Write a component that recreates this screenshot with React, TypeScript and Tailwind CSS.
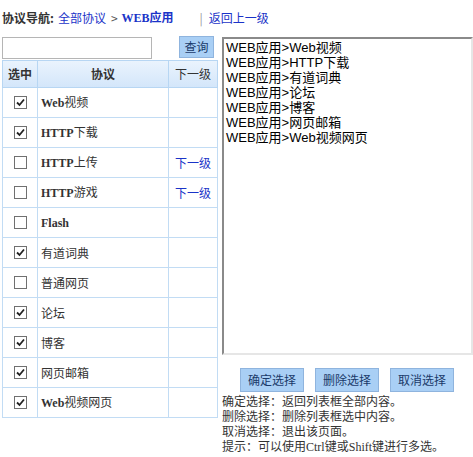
import React from "react";

const rows: { name: string; checked: boolean; next?: boolean }[] = [
  { name: "Web视频", checked: true },
  { name: "HTTP下载", checked: true },
  { name: "HTTP上传", checked: false, next: true },
  { name: "HTTP游戏", checked: false, next: true },
  { name: "Flash", checked: false },
  { name: "有道词典", checked: true },
  { name: "普通网页", checked: false },
  { name: "论坛", checked: true },
  { name: "博客", checked: true },
  { name: "网页邮箱", checked: true },
  { name: "Web视频网页", checked: true },
];

const selected = [
  "WEB应用>Web视频",
  "WEB应用>HTTP下载",
  "WEB应用>有道词典",
  "WEB应用>论坛",
  "WEB应用>博客",
  "WEB应用>网页邮箱",
  "WEB应用>Web视频网页",
];

const serif = "font-['Liberation_Serif','Noto_Sans_CJK_SC',serif]";
const cjk = "font-['Noto_Sans_CJK_SC',sans-serif]";

// latin runs in bold serif, the rest plain
const Name = ({ text }: { text: string }) => {
  const parts = text.match(/[A-Za-z]+|[^A-Za-z]+/g) || [];
  return (
    <>
      {parts.map((p, i) =>
        /[A-Za-z]/.test(p) ? (
          <span key={i} className={`font-bold ${serif}`}>
            {p}
          </span>
        ) : (
          <span key={i}>{p}</span>
        )
      )}
    </>
  );
};

const Box = ({ checked }: { checked: boolean }) => (
  <span className="inline-flex h-[13px] w-[13px] items-center justify-center border border-[#707070] bg-white">
    {checked && (
      <svg width="9" height="9" viewBox="0 0 9 9">
        <path d="M1 4.5 L3.5 7 L8 1.5" stroke="#222" strokeWidth="1.8" fill="none" />
      </svg>
    )}
  </span>
);

const ActionButton = ({ label }: { label: string }) => (
  <button className={`h-[24px] w-[64px] border border-[#8fb4de] bg-[#a9cff5] text-[12px] text-[#1a3a6a] ${cjk}`}>
    {label}
  </button>
);

export default function App() {
  return (
    <div className={`h-[457px] w-[473px] bg-white text-[12px] text-[#333] ${cjk}`}>
      <div className="flex h-[34px] items-center pl-[2px] pt-[2px]">
        <span className="font-bold text-[#333]">协议导航:</span>
        <span className="ml-[4px] text-[#1a33c8]">全部协议</span>
        <span className="ml-[5px] text-[#555]">&gt;</span>
        <span className={`ml-[4px] font-bold text-[#1a33c8] ${serif}`}>WEB应用</span>
        <span className="ml-[26px] text-[#999]">|</span>
        <span className="ml-[6px] text-[#1a33c8]">返回上一级</span>
      </div>
      <div className="flex gap-[4px] pl-[2px]">
        <div className="w-[216px]">
          <div className="flex h-[26px] items-start justify-between">
            <input className="mt-[3px] h-[22px] w-[150px] border border-[#b5b5b5] bg-white" />
            <button className="mt-[2px] mr-[4px] h-[22px] w-[35px] border border-[#8fb4de] bg-[#a9cff5] text-[12px] text-[#1a3a6a]">
              查询
            </button>
          </div>
          <table className="w-[216px] border-collapse border border-[#a9cdf0]">
            <thead>
              <tr className="h-[27px] bg-gradient-to-b from-[#eaf3fd] to-[#d3e6fa] text-[#333]">
                <th className="w-[35px] border border-[#b7d6f3] font-bold">选中</th>
                <th className="w-[131px] border border-[#b7d6f3] font-bold">协议</th>
                <th className="border border-[#b7d6f3] font-normal">下一级</th>
              </tr>
            </thead>
            <tbody>
              {rows.map((r) => (
                <tr key={r.name} className="h-[30px]">
                  <td className="border border-[#c2dcf4] text-center">
                    <span className="flex justify-center">
                      <Box checked={r.checked} />
                    </span>
                  </td>
                  <td className="border border-[#c2dcf4] pl-[3px] text-[#333]">
                    <Name text={r.name} />
                  </td>
                  <td className="border border-[#c2dcf4] text-center text-[#1a33c8]">
                    {r.next ? "下一级" : ""}
                  </td>
                </tr>
              ))}
            </tbody>
          </table>
        </div>
        <div className="flex w-[251px] flex-col">
          <div className="mt-[3px] h-[318px] border-2 border-t-[#8a8a8a] border-l-[#8a8a8a] border-r-[#e6e6e6] border-b-[#e6e6e6] px-[2px] pt-[1px] font-['Liberation_Sans','Noto_Sans_CJK_SC',sans-serif] text-[13px] leading-[15px] text-black">
            {selected.map((s) => (
              <div key={s}>{s}</div>
            ))}
          </div>
          <div className="mt-[13px] flex gap-[11px] pl-[18px]">
            <ActionButton label="确定选择" />
            <ActionButton label="删除选择" />
            <ActionButton label="取消选择" />
          </div>
          <div className="mt-[1px] leading-[15px] text-[#333]">
            <div>确定选择：返回列表框全部内容。</div>
            <div>删除选择：删除列表框选中内容。</div>
            <div>取消选择：退出该页面。</div>
            <div>
              提示：可以使用<span className={serif}>Ctrl</span>键或<span className={serif}>Shift</span>键进行多选。
            </div>
          </div>
        </div>
      </div>
    </div>
  );
}
